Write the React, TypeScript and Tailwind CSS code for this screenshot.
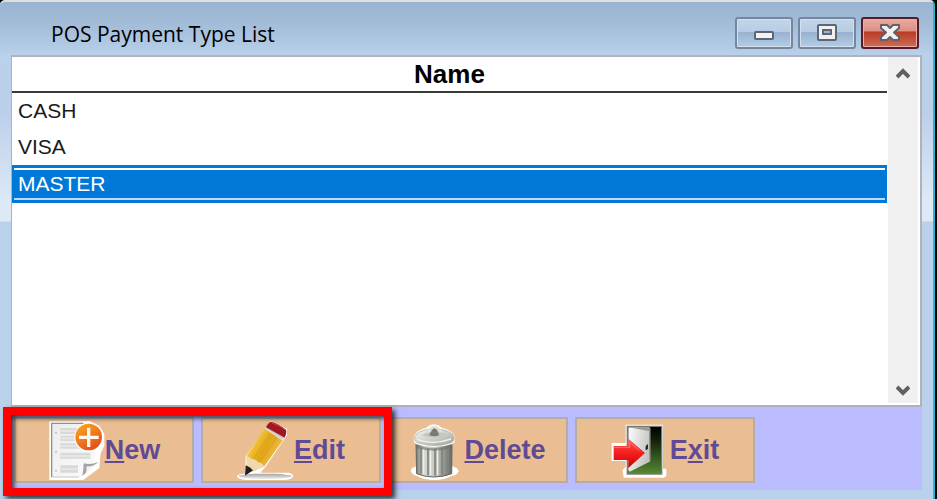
import { useState } from "react";
import type { ReactNode } from "react";

function NewIcon() {
  return (
    <svg width="57" height="59" viewBox="145 75 171 177" aria-hidden="true">
      <defs>
        <linearGradient id="orange" x1="0" y1="0" x2="0.6" y2="1">
          <stop offset="0" stopColor="#ffab1c" />
          <stop offset="1" stopColor="#e2521c" />
        </linearGradient>
        <linearGradient id="paper" x1="0" y1="0" x2="1" y2="1">
          <stop offset="0" stopColor="#ececec" />
          <stop offset="1" stopColor="#fbfbfb" />
        </linearGradient>
      </defs>
      <path d="M149 76h100l20-1 30 14 15 26v34l-11 22-4 45-48 36-10 2H149z" fill="#fff" />
      <path d="M154 81h132v118l-44 44H154z" fill="url(#paper)" />
      <path d="M156 244V82h95" fill="none" stroke="#929292" strokeWidth="4" />
      <path d="M158 243h80" stroke="#c4c4c4" strokeWidth="3" />
      <path d="M182 96h50v18h-50zM182 119h48v16h-48zM182 142h74v16h-74zM182 170h90v18h-90zM182 208h53v22h-53z" fill="#d9d9d9" />
      <path d="M184 105h46M184 127h44M184 150h70M184 180h86M184 219h50" stroke="#e6e6e6" strokeWidth="6" />
      <g fill="#bdbdbd">
        <circle cx="169" cy="110" r="3" />
        <circle cx="169" cy="167" r="3" />
        <circle cx="169" cy="224" r="3" />
      </g>
      <path d="M248 240q4-20 4-38 20 6 44-4z" fill="#a4a4a4" />
      <path d="M255 237q8-12 5-26 16 2 34-9z" fill="#f4f4f4" />
      <circle cx="268" cy="124" r="44" fill="#fff" />
      <circle cx="267" cy="123" r="40" fill="url(#orange)" />
      <path d="M267 95v58M238 124h59" stroke="#fff8ee" strokeWidth="10" />
    </svg>
  );
}

function EditIcon() {
  return (
    <svg width="57" height="59" viewBox="120 75 171 177" aria-hidden="true">
      <defs>
        <linearGradient id="wood" x1="0" y1="0" x2="1" y2="0.6">
          <stop offset="0" stopColor="#f9d465" />
          <stop offset="0.35" stopColor="#f3c235" />
          <stop offset="0.6" stopColor="#e0a417" />
          <stop offset="1" stopColor="#f2c552" />
        </linearGradient>
        <linearGradient id="ground" x1="0" y1="0" x2="0" y2="1">
          <stop offset="0" stopColor="#a2a2a2" />
          <stop offset="1" stopColor="#f0f0f0" />
        </linearGradient>
      </defs>
      <path d="M222 75L270 98V118L207 211l-17 19h85q14 4 14 11-4 11-30 11H148q-26-1-28-11 2-8 24-8L146 181z" fill="#fff" />
      <ellipse cx="205" cy="241" rx="80" ry="8" fill="url(#ground)" />
      <path d="M204 96l54 37-57 79-53-31z" fill="url(#wood)" />
      <path d="M220 112l-50 75M239 124l-53 78" stroke="#d29a14" strokeWidth="2" />
      <path d="M148 181q10 0 15 8 14-1 20 10 12 0 19 13l-38 17-16-19z" fill="#f0d8ae" />
      <path d="M146 208q12 4 22 15l-24 16z" fill="#1e1e1e" />
      <path d="M211 88l53 33-7 13-54-36z" fill="#dcdcdc" />
      <path d="M207 94l52 33" stroke="#aaa" strokeWidth="2" />
      <path d="M222 77q20 4 45 24 3 9-4 24l-56-31q6-14 15-17z" fill="#a3181f" />
      <path d="M224 80q20 6 40 21" fill="none" stroke="#ce4650" strokeWidth="3" />
    </svg>
  );
}

function DeleteIcon() {
  return (
    <svg width="54" height="59" viewBox="45 75 162 177" aria-hidden="true">
      <defs>
        <linearGradient id="can" x1="0" y1="0" x2="1" y2="0">
          <stop offset="0" stopColor="#747872" />
          <stop offset="0.2" stopColor="#d4d6d1" />
          <stop offset="0.5" stopColor="#c9cbc6" />
          <stop offset="0.8" stopColor="#8f928c" />
          <stop offset="1" stopColor="#666a64" />
        </linearGradient>
        <linearGradient id="lid" x1="0" y1="0" x2="1" y2="1">
          <stop offset="0" stopColor="#f5f5f2" />
          <stop offset="0.6" stopColor="#c6c9c2" />
          <stop offset="1" stopColor="#9a9e96" />
        </linearGradient>
      </defs>
      <path d="M47 224q2-10 18-13h108q16 5 18 15-4 12-22 14-20 12-51 12t-52-12q-16-4-19-16z" fill="#fff" />
      <path d="M63 140h108l-1 93q-24 10-53 10t-52-10z" fill="url(#can)" stroke="#62665f" strokeWidth="3" />
      <path d="M78 155v78M99 158v80M120 158v81M141 158v79M160 155l-1 75" stroke="#80847d" strokeWidth="5" />
      <path d="M86 157v76M107 158v80M128 158v80" stroke="#eceeea" strokeWidth="4" />
      <path d="M64 144q54 26 106 0v12q-54 16-106 0z" fill="#6d7069" opacity=".6" />
      <path d="M56 128q0-24 38-33 8-9 24-10 14 1 23 10 38 9 39 33 0 12-10 17-52 16-106 0-8-5-8-17z" fill="#fafaf7" />
      <path d="M59 125q4-24 59-26 55 2 59 26 1 12-12 16-46 15-94 0-13-4-12-16z" fill="url(#lid)" stroke="#a4a8a0" strokeWidth="2" />
      <path d="M67 131q49 17 101-2" fill="none" stroke="#f0f1ee" strokeWidth="4" />
      <path d="M80 118q18-12 38-11 22 0 38 11-38 12-76 0z" fill="#c3c6bf" />
      <path d="M103 118q6-17 15-22 11 6 14 22-14 6-29 0z" fill="#777b74" />
      <path d="M97 108q10-15 21-16 13 1 21 16" fill="none" stroke="#dfe1dc" strokeWidth="6" />
    </svg>
  );
}

function ExitIcon() {
  return (
    <svg width="59" height="59" viewBox="122 75 177 177" aria-hidden="true">
      <defs>
        <linearGradient id="outside" x1="0" y1="0" x2="0" y2="1">
          <stop offset="0" stopColor="#000" />
          <stop offset="0.25" stopColor="#0e1b08" />
          <stop offset="1" stopColor="#568a34" />
        </linearGradient>
        <linearGradient id="door" x1="0" y1="0" x2="1" y2="0.4">
          <stop offset="0" stopColor="#fdfdfd" />
          <stop offset="1" stopColor="#c3c5c1" />
        </linearGradient>
        <linearGradient id="arrow" x1="0" y1="0" x2="0" y2="1">
          <stop offset="0" stopColor="#ff5a52" />
          <stop offset="0.5" stopColor="#f51d1d" />
          <stop offset="1" stopColor="#c90000" />
        </linearGradient>
      </defs>
      <path d="M166 86h112v132h10v22l-8 5H160l-3-24 9-8v-18h-42v-54h42z" fill="#fff" />
      <path d="M171 91h103v143H171z" fill="url(#outside)" stroke="#777b78" strokeWidth="4" />
      <path d="M174 94h64v103l-60 30-4-5z" fill="url(#door)" />
      <path d="M176 94h62v12z" fill="#9a9c99" />
      <path d="M239 96v101" stroke="#999c96" strokeWidth="3" />
      <path d="M231 146q-5 4-4 15l5-3z" fill="#222" stroke="#222" strokeWidth="3" />
      <path d="M130 150h44v-22l50 43-50 45v-24h-44z" fill="url(#arrow)" />
      <path d="M133 154h45v-15l29 25" fill="none" stroke="#ff8b82" strokeWidth="3" opacity=".7" />
    </svg>
  );
}

function ToolButton({ icon, children }: { icon: ReactNode; children: ReactNode }) {
  return (
    <button
      type="button"
      className="flex h-[66px] w-[180px] items-center justify-center border-2 border-[#b3ada4] bg-[#eabe92] text-[27px] leading-8 font-bold text-[#604a94]"
    >
      {icon}
      <span>{children}</span>
    </button>
  );
}

function Key({ children }: { children: ReactNode }) {
  return <span className="underline decoration-2 underline-offset-2">{children}</span>;
}

const captionButton =
  "flex h-8 w-[58px] items-center justify-center rounded-[3px] border-2 border-[#75879f] bg-[linear-gradient(#c3d5e9_0%,#b7cce3_45%,#98b2cf_48%,#b4cde7_100%)] shadow-[inset_0_0_0_1px_#d2e0f0]";

const payments = ["CASH", "VISA", "MASTER"];

export default function App() {
  const [selected, setSelected] = useState("MASTER");

  return (
    <div className="min-h-screen bg-black pr-[2px] font-['Liberation_Sans',Arial,sans-serif] text-black">
      <main className="flex min-h-screen flex-col rounded-t-[5px] border-t-2 border-r-2 border-t-[#dedfe1] border-r-[#28b5cd] bg-[#b9d1ea] bg-[linear-gradient(#99b4d1_0px,#a4bdd9_24px,#b9d1ea_54px,#bccfe9_110px,#dde9f6_200px,#dde9f6_219px,#b9d1ea_220px)] pr-[11px] pb-[9px] pl-[11px]">
        <header className="flex h-[53px] items-start justify-between pt-[15px] pr-[3px] pl-10">
          <h1 className="font-['Open_Sans','Noto_Sans',sans-serif] text-[21px] leading-[34px]">POS Payment Type List</h1>
          <div className="flex gap-[5px]">
            <button type="button" aria-label="Minimize" className={captionButton}>
              <svg width="22" height="20" viewBox="0 0 22 20" aria-hidden="true">
                <rect x="2" y="9" width="18" height="7" rx="1" fill="#f3f3f3" stroke="#5c6675" strokeWidth="2" />
              </svg>
            </button>
            <button type="button" aria-label="Maximize" className={captionButton}>
              <svg width="22" height="20" viewBox="0 0 22 20" aria-hidden="true">
                <rect x="2" y="2" width="18" height="15" rx="1" fill="#f0f0f0" stroke="#5c6675" strokeWidth="2" />
                <rect x="7" y="7" width="8" height="4" fill="#9cb3cc" stroke="#5c6675" strokeWidth="2" />
              </svg>
            </button>
            <button
              type="button"
              aria-label="Close"
              className="flex h-8 w-[58px] items-center justify-center rounded-[3px] border-2 border-[#571c28] bg-[linear-gradient(#e9aba1_0%,#dd8f83_43%,#b93b25_46%,#cf6c58_100%)] shadow-[inset_0_0_0_1px_#eab0a5]"
            >
              <svg width="22" height="20" viewBox="0 0 22 20" aria-hidden="true">
                <path
                  d="M2 2h6l3 3 3-3h6v3l-5 4.500 5 4.500v3h-6l-3-3-3 3H2v-3l5-4.500L2 5z"
                  fill="#f2f2f2"
                  stroke="#66606a"
                  strokeWidth="2"
                  strokeLinejoin="round"
                />
              </svg>
            </button>
          </div>
        </header>

        <section className="flex flex-1 border-2 border-l border-[#aeb2bb] bg-white">
          <div className="flex-1">
            <table className="w-full border-collapse">
              <thead>
                <tr>
                  <th className="h-[35px] border-b-2 border-[#383a38] p-0 text-center text-[26px] leading-8 font-bold">Name</th>
                </tr>
              </thead>
              <tbody>
                {payments.map((name) => (
                  <tr key={name} onClick={() => setSelected(name)}>
                    <td
                      className={
                        name === selected
                          ? "h-[38px] bg-[#0078d7] p-0 text-[21px] text-white"
                          : "h-9 p-0 text-[21px] text-[#1a1a1a]"
                      }
                    >
                      <div
                        className={
                          name === selected
                            ? "mx-[2px] border-y-2 border-t-white border-b-[#bcdaf4] pl-1 leading-7"
                            : "pl-[6px] leading-9"
                        }
                      >
                        {name}
                      </div>
                    </td>
                  </tr>
                ))}
              </tbody>
            </table>
          </div>
          <div className="mr-[2px] mb-[2px] ml-px flex w-[30px] flex-col items-center justify-between bg-[#f0f0f0] pt-[10px] pb-[7px]">
            <button type="button" aria-label="Scroll up">
              <svg width="14" height="12" viewBox="0 0 14 12" aria-hidden="true">
                <path d="M1 10l6-6 6 6" fill="none" stroke="#606060" strokeWidth="4" />
              </svg>
            </button>
            <button type="button" aria-label="Scroll down">
              <svg width="14" height="12" viewBox="0 0 14 12" aria-hidden="true">
                <path d="M1 3l6 6 6-6" fill="none" stroke="#606060" strokeWidth="4" />
              </svg>
            </button>
          </div>
        </section>

        <nav aria-label="Payment type actions" className="relative flex h-[83px] gap-[7px] bg-[#bbbbff] pt-[10px] pl-[3px]">
          <ToolButton icon={<NewIcon />}>
            <Key>N</Key>ew
          </ToolButton>
          <ToolButton icon={<EditIcon />}>
            <Key>E</Key>dit
          </ToolButton>
          <ToolButton icon={<DeleteIcon />}>
            <Key>D</Key>elete
          </ToolButton>
          <ToolButton icon={<ExitIcon />}>
            E<Key>x</Key>it
          </ToolButton>
          <div className="pointer-events-none absolute top-0 -left-2 h-[89px] w-[389px] border-8 border-[#ff0000] shadow-[3px_3px_5px_rgba(0,0,0,0.75),inset_3px_3px_5px_rgba(0,0,0,0.75)]" />
        </nav>
      </main>
    </div>
  );
}
